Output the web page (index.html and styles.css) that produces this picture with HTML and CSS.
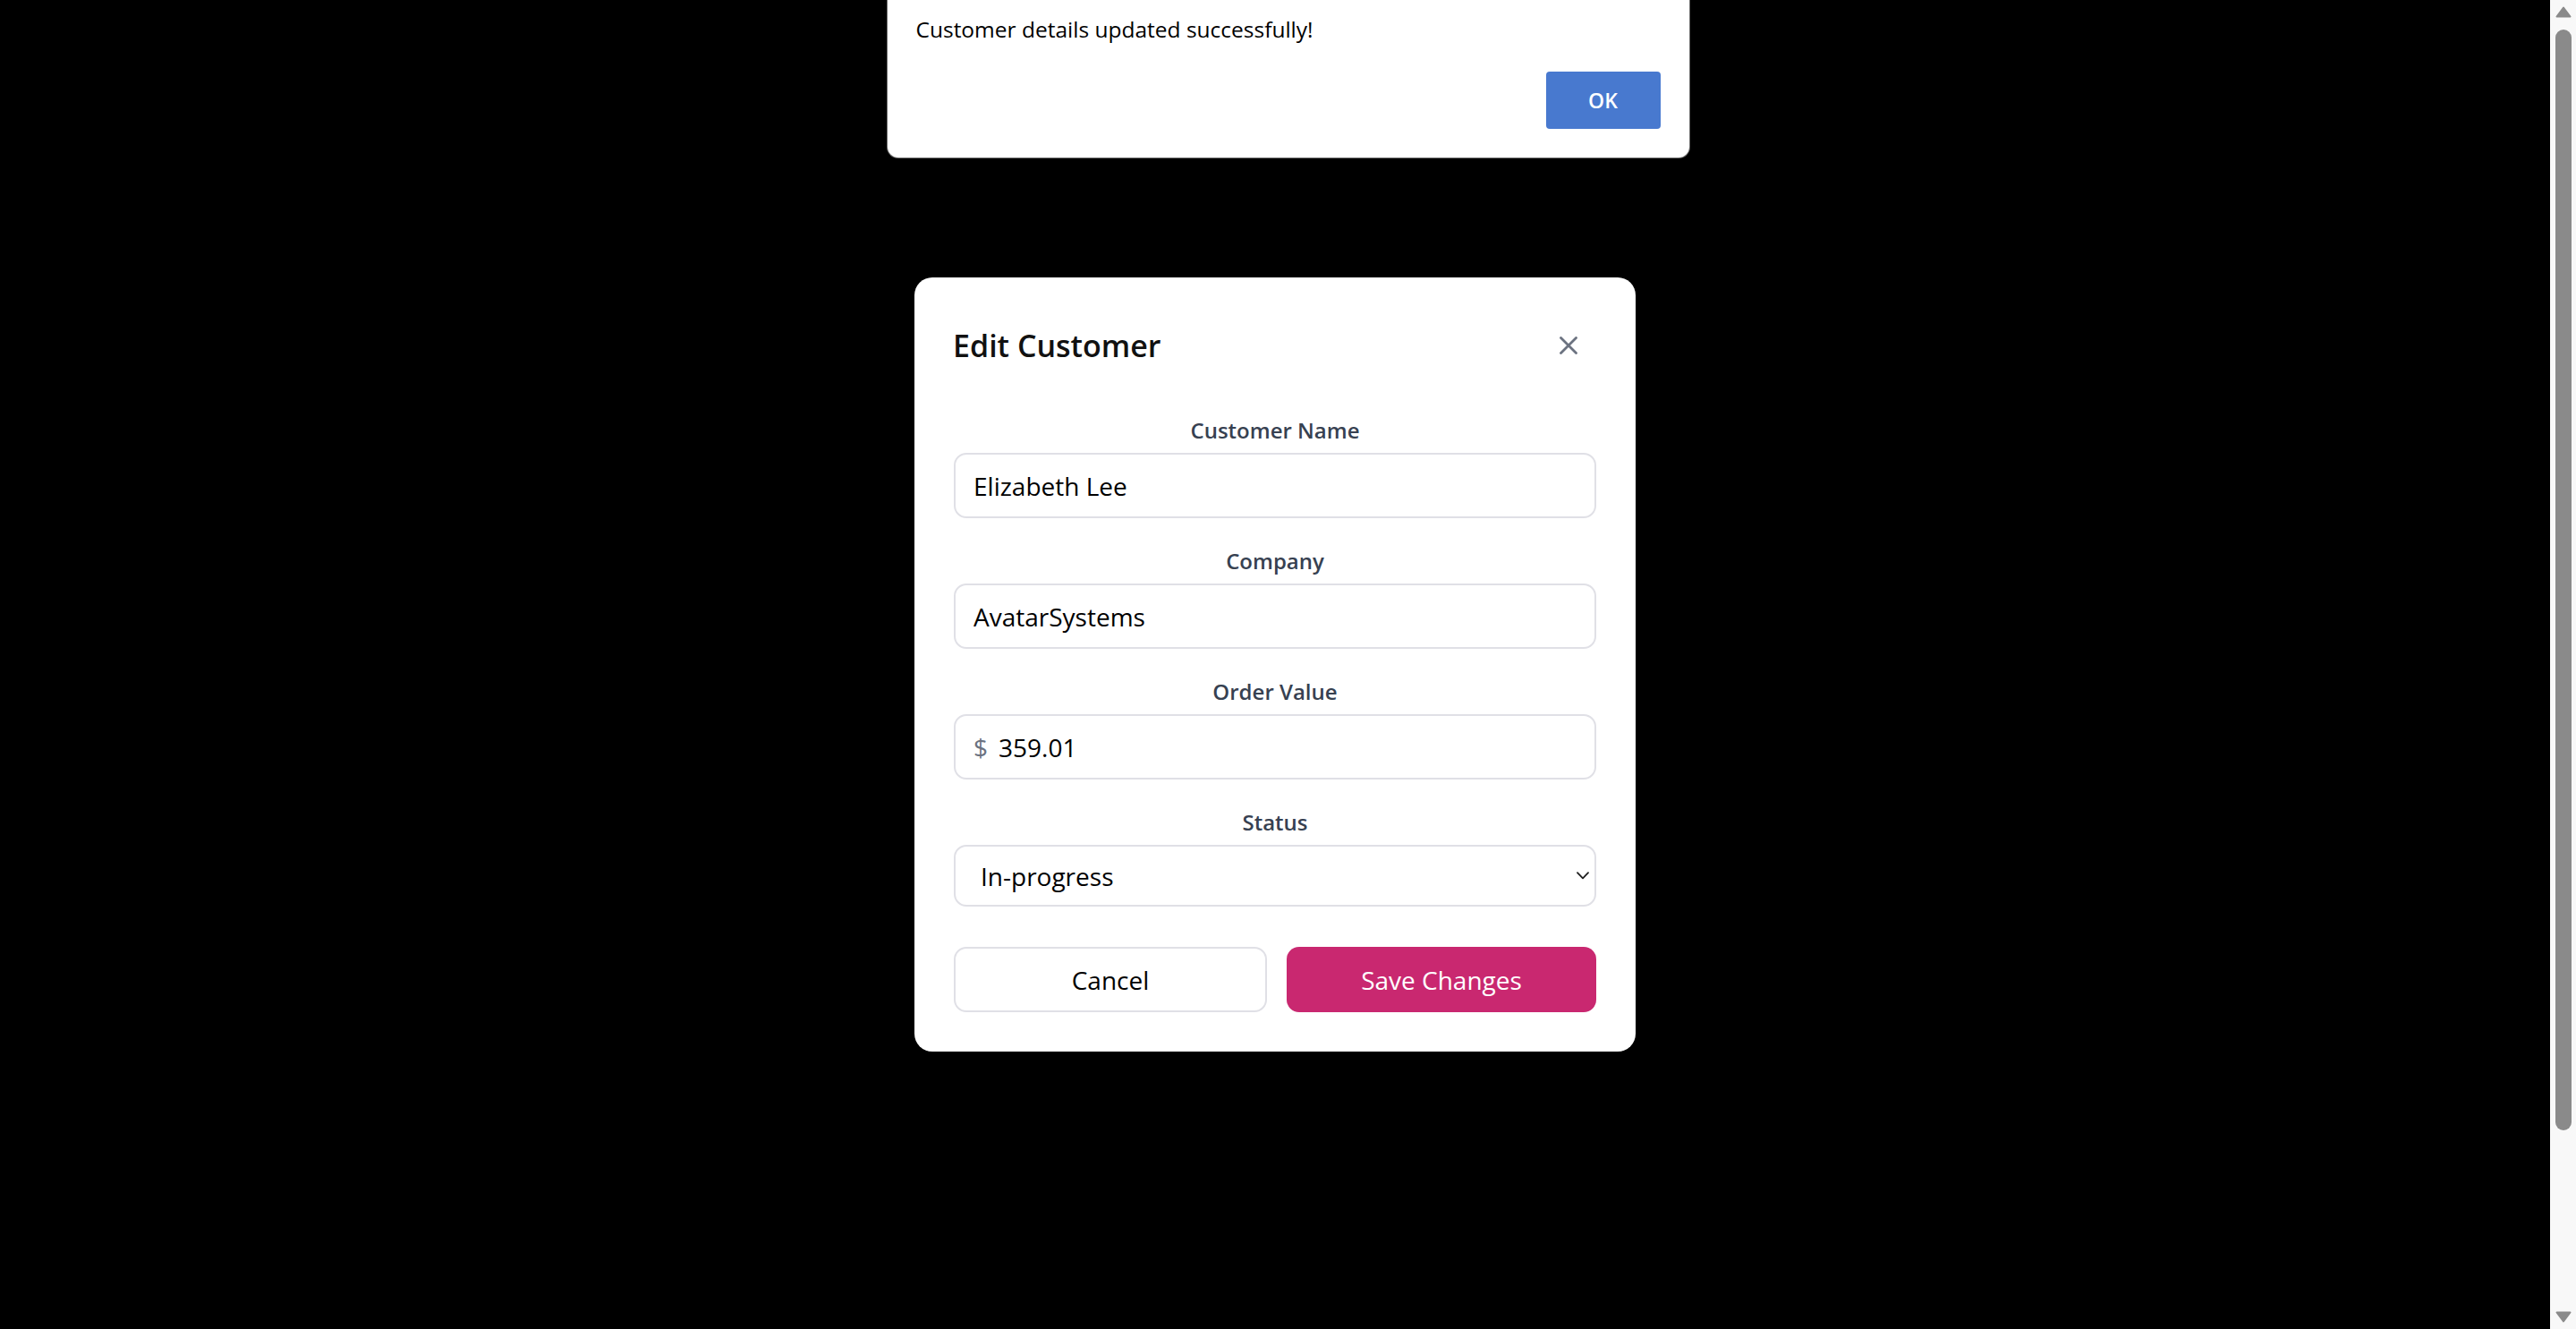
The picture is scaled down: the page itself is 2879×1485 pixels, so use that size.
FILE: index.html
```html
<!DOCTYPE html>
<html lang="en">
<head>
<meta charset="utf-8">
<title>Edit Customer</title>
<link rel="stylesheet" href="styles.css">
</head>
<body>
  <div class="viewport">
    <div class="modal" role="dialog" aria-labelledby="modal-title">
      <div class="modal-header">
        <h2 class="modal-title" id="modal-title">Edit Customer</h2>
        <button class="close-btn" type="button" aria-label="Close">
          <svg width="20" height="20" viewBox="0 0 20 20" aria-hidden="true">
            <path d="M1.5 1.5 L18.5 18.5 M18.5 1.5 L1.5 18.5" stroke="#6b7280" stroke-width="2.8" stroke-linecap="round" fill="none"/>
          </svg>
        </button>
      </div>
      <form class="form">
        <div class="fields">
          <div class="field">
            <label class="label" for="name">Customer Name</label>
            <input class="input" id="name" type="text" value="Elizabeth Lee">
          </div>
          <div class="field">
            <label class="label" for="company">Company</label>
            <input class="input" id="company" type="text" value="AvatarSystems">
          </div>
          <div class="field">
            <label class="label" for="value">Order Value</label>
            <div class="input money">
              <span class="currency">$</span>
              <input class="money-input" id="value" type="text" value="359.01">
            </div>
          </div>
          <div class="field">
            <label class="label" for="status">Status</label>
            <div class="select-wrap">
              <select class="select" id="status">
                <option>Pending</option>
                <option selected>In-progress</option>
                <option>Completed</option>
              </select>
              <svg class="chevron" width="14" height="9" viewBox="0 0 14 9" aria-hidden="true">
                <path d="M1 1.2 L7 7.4 L13 1.2" stroke="#1f1f1f" stroke-width="1.8" fill="none" stroke-linecap="round" stroke-linejoin="round"/>
              </svg>
            </div>
          </div>
        </div>
        <div class="actions">
          <button class="btn btn-cancel" type="button">Cancel</button>
          <button class="btn btn-save" type="button">Save Changes</button>
        </div>
      </form>
    </div>
  </div>

  <div class="scrollbar" aria-hidden="true">
    <svg class="arrow" width="18" height="13" viewBox="0 0 18 13"><path d="M9 1.5 L16.5 11.5 L1.5 11.5 Z" fill="#8a8a8a" stroke="#8a8a8a" stroke-width="2" stroke-linejoin="round"/></svg>
    <div class="thumb"></div>
    <div class="track-rest"></div>
    <svg class="arrow" width="18" height="13" viewBox="0 0 18 13"><path d="M1.5 1.5 L16.5 1.5 L9 11.5 Z" fill="#8a8a8a" stroke="#8a8a8a" stroke-width="2" stroke-linejoin="round"/></svg>
  </div>

  <div class="alert" role="alertdialog">
    <p class="alert-text">Customer details updated successfully!</p>
    <button class="alert-ok" type="button">OK</button>
  </div>
</body>
</html>
```

FILE: styles.css
```css
* { box-sizing: border-box; }

html, body {
  margin: 0;
  height: 100%;
}

body {
  background: #000;
  display: flex;
  overflow: hidden;
  font-family: "Open Sans", "Noto Sans", "Liberation Sans", sans-serif;
  color: #111;
}

.viewport {
  flex: 1;
  display: flex;
  align-items: center;
  justify-content: center;
}

.modal {
  width: 806px;
  background: #fff;
  border-radius: 20px;
  padding: 44px;
}

.modal-header {
  display: flex;
  align-items: center;
  justify-content: space-between;
  height: 64px;
  margin-bottom: 44px;
}

.modal-title {
  margin: 0;
  margin-left: -1px;
  font-size: 34px;
  font-weight: 600;
  line-height: 51px;
  color: #111;
}

.close-btn {
  width: 64px;
  height: 64px;
  margin-right: -1px;
  border: none;
  background: transparent;
  display: flex;
  align-items: center;
  justify-content: center;
  padding: 0;
  cursor: pointer;
}

.form {
  display: flex;
  flex-direction: column;
}

.fields {
  display: flex;
  flex-direction: column;
  gap: 29px;
}

.field {
  display: flex;
  flex-direction: column;
}

.label {
  text-align: center;
  font-size: 24px;
  line-height: 37px;
  font-weight: 600;
  color: #374151;
  margin-bottom: 7px;
}

.input {
  height: 73px;
  width: 100%;
  border: 2px solid #e0e0e6;
  border-radius: 14px;
  padding: 0 20px;
  font-family: inherit;
  font-size: 28px;
  color: #000;
  background: #fff;
  outline: none;
}

.money {
  display: flex;
  align-items: center;
  gap: 12px;
}

.currency {
  color: #6b7280;
  font-size: 28px;
}

.money-input {
  flex: 1;
  border: none;
  outline: none;
  padding: 0;
  font-family: inherit;
  font-size: 28px;
  color: #000;
  background: transparent;
  min-width: 0;
}

.select-wrap {
  position: relative;
}

.select {
  -webkit-appearance: none;
  appearance: none;
  width: 100%;
  height: 69px;
  border: 2px solid #e0e0e6;
  border-radius: 14px;
  padding: 0 40px 0 28px;
  font-family: inherit;
  font-size: 28px;
  color: #000;
  background: #fff;
  outline: none;
}

.chevron {
  position: absolute;
  right: 8px;
  top: 30px;
  pointer-events: none;
}

.actions {
  display: flex;
  gap: 22px;
  margin-top: 45px;
}

.btn {
  flex: 1;
  height: 73px;
  border-radius: 14px;
  font-family: inherit;
  font-size: 28px;
  cursor: pointer;
}

.btn-cancel {
  background: #fff;
  border: 2px solid #e0e0e6;
  color: #000;
}

.btn-save {
  background: #c92870;
  border: none;
  color: #fff;
}

/* native-looking scrollbar column */
.scrollbar {
  width: 29px;
  flex: 0 0 29px;
  background: #f8f8f8;
  display: flex;
  flex-direction: column;
  align-items: flex-start;
  padding: 7px 5px 7px 6px;
}

.arrow {
  display: block;
  flex: 0 0 13px;
}

.thumb {
  width: 18px;
  height: 1230px;
  margin-top: 13px;
  border-radius: 9px;
  background: #8a8a8a;
}

.track-rest {
  flex: 1;
}

/* browser alert dialog */
.alert {
  position: absolute;
  top: 0;
  left: 50%;
  transform: translateX(-50%);
  width: 896px;
  height: 176px;
  background: #fff;
  border-radius: 0 0 12px 12px;
  box-shadow: 0 0 0 1px rgba(140, 140, 140, 0.8);
  padding: 15px 32px 32px;
  display: flex;
  flex-direction: column;
}

.alert-text {
  margin: 0;
  font-size: 24.5px;
  line-height: 36px;
  color: #000;
}

.alert-ok {
  align-self: flex-end;
  margin-top: 29px;
  width: 128px;
  height: 64px;
  border: none;
  border-radius: 4px;
  background: #4879cf;
  color: #fff;
  font-family: inherit;
  font-size: 23px;
  font-weight: 600;
}
```
